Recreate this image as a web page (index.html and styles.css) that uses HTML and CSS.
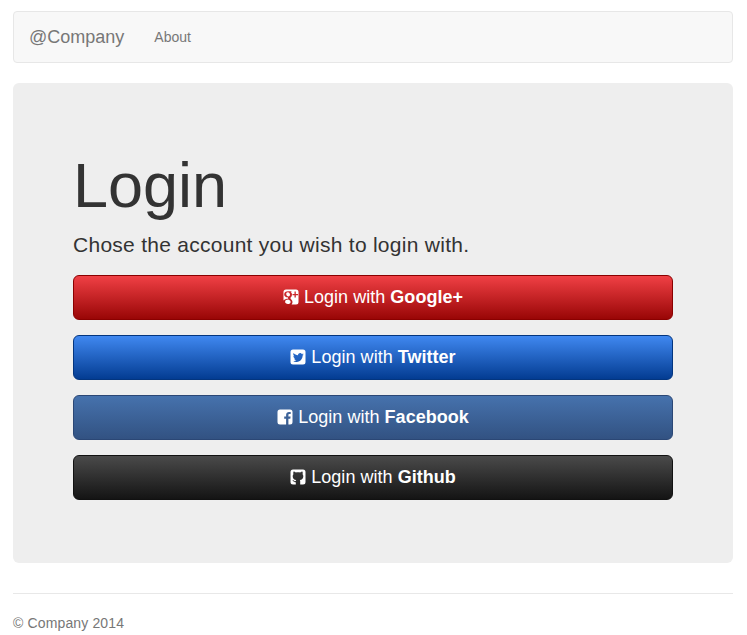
FILE: index.html
```html
<!DOCTYPE html>
<html lang="en">
<head>
<meta charset="utf-8">
<title>Login</title>
<link rel="stylesheet" href="styles.css">
</head>
<body>
<div class="container">
  <nav class="navbar">
    <a class="brand" href="#">@Company</a>
    <a class="nav-link" href="#">About</a>
  </nav>
  <main class="jumbotron">
    <h1>Login</h1>
    <p class="lead">Chose the account you wish to login with.</p>
    <div class="buttons">
      <a class="btn btn-google" href="#"><svg class="icon" viewBox="0 0 16 16"><path fill="#fff" fill-rule="evenodd" d="M3 .5H13A2.5 2.5 0 0 1 15.5 3V13A2.5 2.5 0 0 1 13 15.5H8.6C9.2 14.7 9.5 13.9 9.5 13C9.5 11.2 7.6 10.3 7.4 9.3C7.4 8.5 9 7.8 9 5.6C9 4.4 8.4 3.5 7.8 3.1L9 2.2H5C2.8 2.2 1.2 3.4 1.2 5.4C1.2 7.2 2.9 8.4 4.9 8.3C4.7 8.8 4.9 9.4 5.3 9.8C3.2 9.8 1.4 10.4 .5 11.5V3A2.5 2.5 0 0 1 3 .5ZM11.5 2.5V5H9.5V6.2H11.5V8.5H12.8V6.2H15V5H12.8V2.5ZM4.9 3.2C6.1 3.2 6.9 4.4 7 5.6C7.1 6.7 6.5 7.5 5.5 7.5C4.3 7.5 3.3 6.4 3.2 5.1C3.1 4 3.8 3.2 4.9 3.2ZM5.2 10.6C6.7 11.1 7.6 11.8 7.6 12.9C7.6 14.2 6.4 15 4.9 15C3.3 15 2.1 14.1 2.1 12.8C2.1 11.4 3.6 10.6 5.2 10.6Z"/></svg> Login with <b>Google+</b></a>
      <a class="btn btn-twitter" href="#"><svg class="icon" viewBox="0 0 16 16"><path fill="#fff" fill-rule="evenodd" d="M3 .5H13A2.5 2.5 0 0 1 15.5 3V13A2.5 2.5 0 0 1 13 15.5H3A2.5 2.5 0 0 1 .5 13V3A2.5 2.5 0 0 1 3 .5ZM10.2 3.9C8.9 3.9 7.9 5 8 6.3C6.2 6.2 4.7 5.4 3.6 4.1C3 5.2 3.3 6.6 4.4 7.3C4 7.3 3.6 7.2 3.3 7C3.3 8.2 4.1 9.2 5.2 9.4C4.9 9.5 4.5 9.5 4.1 9.4C4.4 10.4 5.4 11.1 6.5 11.1C5.5 11.9 4.2 12.3 2.9 12.1C4.1 12.9 5.4 13.2 6.7 13.1C10.5 12.9 12.7 9.7 12.6 6.6C13 6.3 13.4 5.9 13.7 5.4C13.3 5.6 12.9 5.7 12.4 5.8C12.9 5.5 13.2 5 13.4 4.5C13 4.8 12.5 5 12 5.1C11.6 4.6 10.9 3.9 10.2 3.9Z"/></svg> Login with <b>Twitter</b></a>
      <a class="btn btn-facebook" href="#"><svg class="icon" viewBox="0 0 16 16"><path fill="#fff" d="M3 .5H13A2.5 2.5 0 0 1 15.5 3V13A2.5 2.5 0 0 1 13 15.5H11.4V9.8H13.3L13.6 7.6H11.4V6.2C11.4 5.5 11.6 5.1 12.5 5.1H13.7V3.1C13.4 3.1 12.8 3 12 3C10.3 3 9.1 4.1 9.1 6V7.6H7.2V9.8H9.1V15.5H3A2.5 2.5 0 0 1 .5 13V3A2.5 2.5 0 0 1 3 .5Z"/></svg> Login with <b>Facebook</b></a>
      <a class="btn btn-github" href="#"><svg class="icon" viewBox="0 0 16 16"><path fill="#fff" fill-rule="evenodd" d="M3 .5H13A2.5 2.5 0 0 1 15.5 3V13A2.5 2.5 0 0 1 13 15.5H3A2.5 2.5 0 0 1 .5 13V3A2.5 2.5 0 0 1 3 .5ZM3.6 2.6C3.2 3.4 3.1 4.4 3.4 5.2C2.9 5.8 2.7 6.5 2.7 7.3C2.7 9.8 4.1 10.9 6.2 11.1C5.9 11.4 5.8 11.8 5.8 12.1C5.1 12.4 4.4 12.3 4 11.7C3.6 11 3 10.8 2.6 10.9C2.4 11 2.5 11.2 2.8 11.4C3.2 11.7 3.4 12.2 3.6 12.6C4 13.3 5 13.5 5.8 13.3V15.5H10.2V12.4C10.2 11.8 10.1 11.4 9.8 11.1C11.9 10.9 13.3 9.8 13.3 7.3C13.3 6.5 13.1 5.8 12.6 5.2C12.9 4.4 12.8 3.4 12.4 2.6C11.6 2.6 10.8 3.1 10.2 3.5C8.8 3.1 7.2 3.1 5.8 3.5C5.2 3.1 4.4 2.6 3.6 2.6Z"/></svg> Login with <b>Github</b></a>
    </div>
  </main>
  <hr class="rule">
  <footer class="footer">© Company 2014</footer>
</div>
</body>
</html>
```
FILE: styles.css
```css
* { box-sizing: border-box; }
html, body { margin: 0; padding: 0; }
body {
  background: #fff;
  color: #777;
  font-family: "Liberation Sans", Arial, sans-serif;
  font-size: 14px;
  line-height: 20px;
}
a { text-decoration: none; }
.container { padding: 11px 14px 0 13px; }
.navbar {
  display: flex;
  align-items: center;
  height: 52px;
  padding: 0 15px;
  background: #f8f8f8;
  border: 1px solid #e7e7e7;
  border-radius: 4px;
  margin-bottom: 20px;
}
.brand { color: #777; font-size: 18px; margin-right: 30px; }
.nav-link { color: #777; font-size: 14px; }
.jumbotron {
  height: 480px;
  padding: 60px;
  background: #eee;
  border-radius: 6px;
}
h1 {
  margin: 8px 0 0;
  color: #333;
  font-size: 63px;
  font-weight: 500;
  line-height: 69px;
}
.lead {
  margin: 10px 0 15px;
  color: #333;
  font-size: 21px;
  font-weight: 200;
  line-height: 30px;
  letter-spacing: 0.27px;
}
.buttons { display: flex; flex-direction: column; gap: 15px; }
.btn {
  display: block;
  height: 45px;
  border: 1px solid;
  border-radius: 6px;
  color: #fff;
  font-size: 18px;
  line-height: 42px;
  text-align: center;
  letter-spacing: 0.03px;
}
.icon { width: 16px; height: 16px; vertical-align: -2px; }
.btn-google { background: linear-gradient(#f04045, #990606); border-color: #8a0000; }
.btn-twitter { background: linear-gradient(#4088f0, #033c92); border-color: #03357f; }
.btn-facebook { background: linear-gradient(#4672ad, #325282); border-color: #2b4775; }
.btn-github { background: linear-gradient(#4a4a4a, #141414); border-color: #111; }
.rule { margin: 30px 0 0; border: 0; border-top: 1px solid #e8e8e8; }
.footer { padding-top: 19px; color: #777; letter-spacing: 0.14px; }
```
